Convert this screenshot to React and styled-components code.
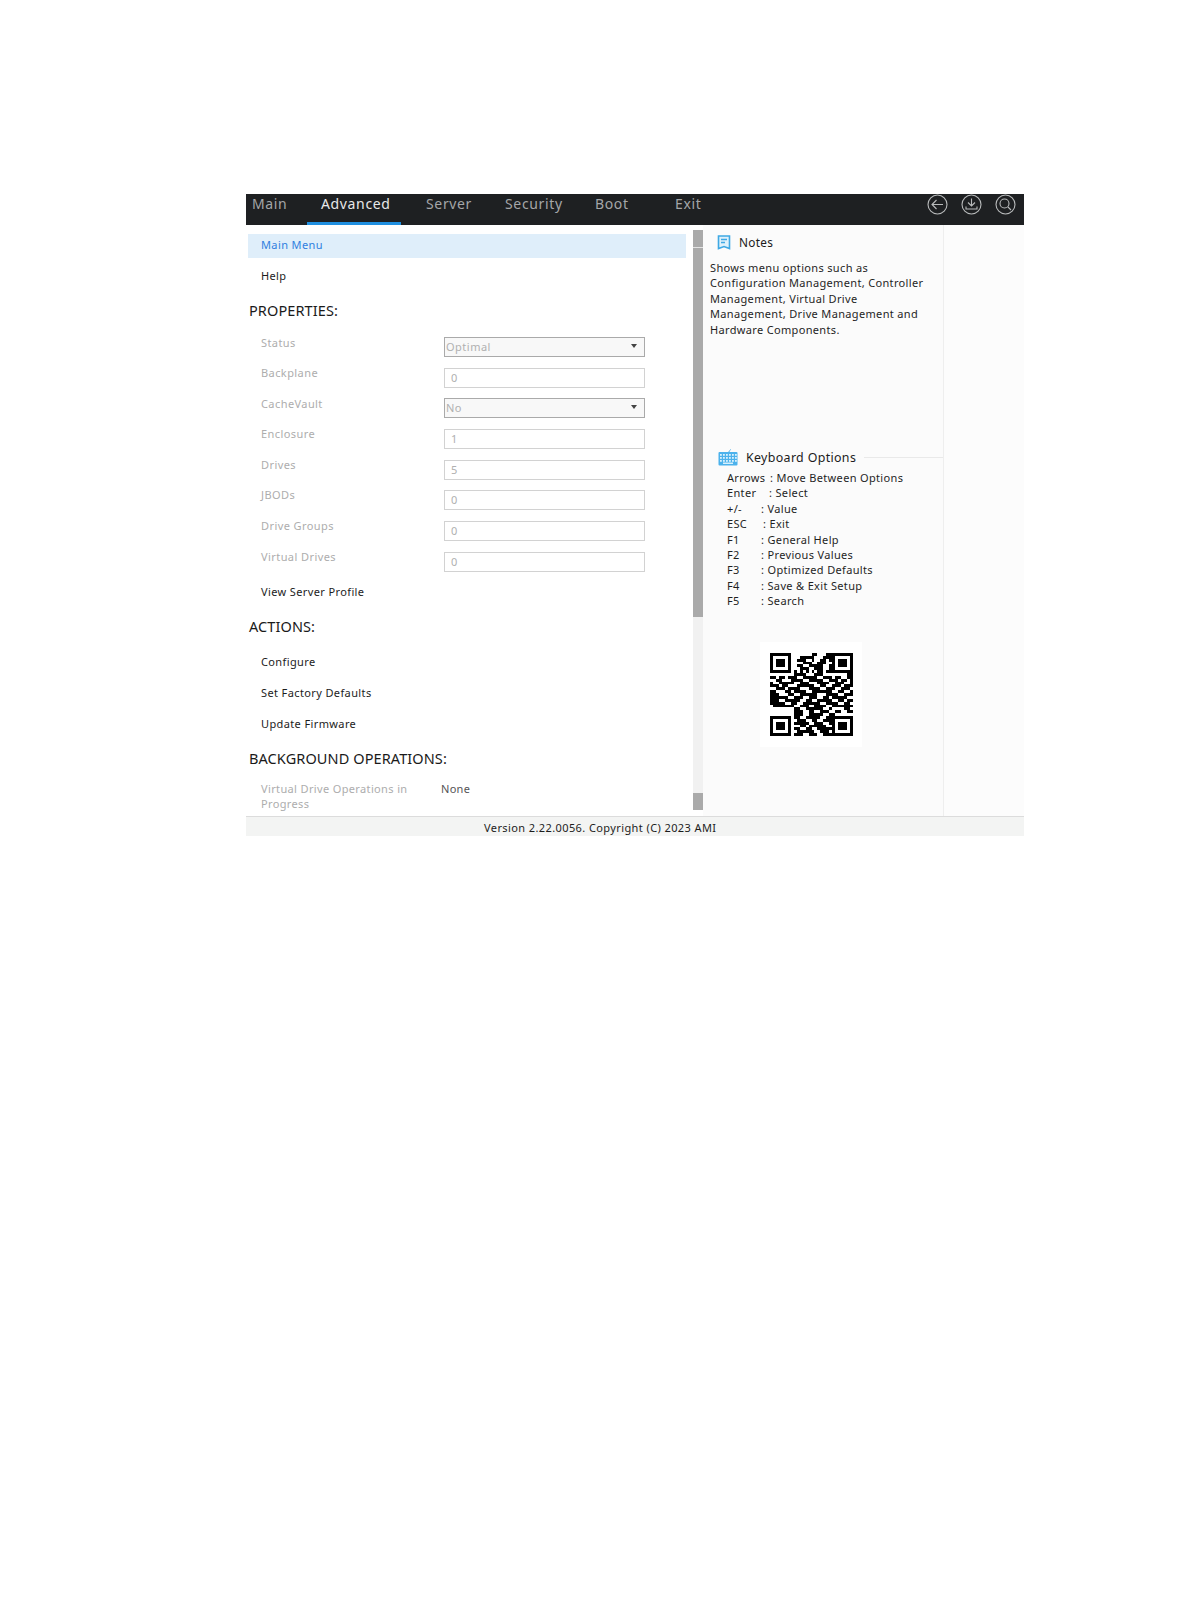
import React from "react";
import styled, { createGlobalStyle } from "styled-components";

const Global = createGlobalStyle`
  html, body {
    margin: 0;
    background: #fff;
    font-family: "Noto Sans", "Open Sans", sans-serif;
  }
`;

const Page = styled.div`
  width: 1191px;
  height: 1616px;
  padding: 194px 0 0 246px;
  box-sizing: border-box;
`;

const Frame = styled.div`
  width: 778px;
  display: flex;
  flex-direction: column;
`;

const Nav = styled.div`
  height: 31px;
  background: #1e2022;
  display: flex;
  align-items: stretch;
`;

const Tab = styled.div`
  width: ${(p) => p.$w}px;
  padding-left: ${(p) => p.$pl}px;
  box-sizing: border-box;
  font-size: 14px;
  line-height: 19px;
  letter-spacing: 0.65px;
  color: ${(p) => (p.$active ? "#e8e8e8" : "#a4a6a8")};
  border-bottom: 3px solid ${(p) => (p.$active ? "#1f8fe0" : "transparent")};
`;

const NavIcons = styled.div`
  margin-left: auto;
  display: flex;
  align-items: flex-start;
  gap: 13px;
  padding: 0 8px 0 0;
`;

const Body = styled.div`
  height: 591px;
  display: grid;
  grid-template-columns: 447px 10px 241px 80px;
`;

const Left = styled.div`
  padding: 9px 7px 0 2px;
  overflow: hidden;
`;

const MenuRow = styled.div`
  height: 24px;
  line-height: ${(p) => (p.$selected ? 22 : 24)}px;
  padding-left: 13px;
  font-size: 11px;
  letter-spacing: 0.38px;
  color: ${(p) => (p.$selected ? "#2f7fe0" : "#1c1c1c")};
  background: ${(p) => (p.$selected ? "#dfeefa" : "transparent")};
  margin-top: ${(p) => p.$mt || 0}px;
`;

const Section = styled.div`
  font-size: 14.5px;
  line-height: 20px;
  letter-spacing: 0.1px;
  padding-left: 1px;
  color: #1a1a1a;
  margin-top: ${(p) => p.$mt}px;
`;

const Fields = styled.div`
  margin-top: 17px;
  display: flex;
  flex-direction: column;
  gap: 11px;
`;

const Field = styled.div`
  height: 19.7px;
  display: grid;
  grid-template-columns: 196px 201px;
`;

const Label = styled.div`
  padding: ${(p) => (p.$select ? 1 : 0)}px 0 0 13px;
  font-size: 11px;
  line-height: 9px;
  letter-spacing: 0.42px;
  color: #adadad;
`;

const InputBox = styled.div`
  position: relative;
  border: 1px solid ${(p) => (p.$select ? "#aaa" : "#d2d2d2")};
  background: ${(p) => (p.$select ? "#f8f8f8" : "#fff")};
  padding-left: ${(p) => (p.$select ? 1 : 6)}px;
  font-size: 11px;
  line-height: 18px;
  letter-spacing: 0.5px;
  color: #b0b0b0;
`;

const Caret = styled.span`
  position: absolute;
  right: 7px;
  top: 6px;
  width: 0;
  height: 0;
  border-left: 3.5px solid transparent;
  border-right: 3.5px solid transparent;
  border-top: 4px solid #444;
`;

const OperationRow = styled.div`
  display: grid;
  grid-template-columns: 193px 1fr;
  margin-top: 13px;
`;

const OperationLabel = styled.div`
  padding-left: 13px;
  font-size: 11px;
  line-height: 15.4px;
  letter-spacing: 0.36px;
  color: #adadad;
`;

const OperationValue = styled.div`
  font-size: 11px;
  line-height: 15.4px;
  letter-spacing: 0.3px;
  color: #555;
`;

const Scrollbar = styled.div`
  margin-top: 5px;
  height: 580px;
  background: #f1f1f1;
  display: flex;
  flex-direction: column;
  justify-content: space-between;
`;

const Thumb = styled.div`
  position: relative;
  height: ${(p) => p.$h}px;
  background: #aaa;
`;

const ThumbLine = styled.span`
  position: absolute;
  left: 0;
  right: 0;
  top: 17px;
  height: 1px;
  background: #e4e4e4;
`;

const Right = styled.div`
  background: #fbfbfb;
  border-right: 1px solid #eee;
  padding: 0 0 0 7px;
`;

const RightEnd = styled.div`
  background: #fcfcfc;
`;

const NotesHead = styled.div`
  display: flex;
  align-items: center;
  height: 20px;
  margin-top: 7px;
  padding-left: 7px;
  gap: 8px;
  font-size: 11.8px;
  letter-spacing: 0.3px;
  color: #1c1c1c;
`;

const Notes = styled.div`
  margin-top: 8px;
  width: 226px;
  font-size: 11px;
  line-height: 15.4px;
  letter-spacing: 0.34px;
  color: #1f1f1f;
`;

const KeyHead = styled.div`
  display: flex;
  align-items: center;
  margin-top: 110px;
  margin-left: 8px;
  height: 20px;
  gap: 8px;
  font-size: 12.4px;
  letter-spacing: 0.35px;
  color: #1c1c1c;
`;

const KeyRule = styled.div`
  flex: 1;
  height: 1px;
  background: #e9e9e9;
`;

const KeyList = styled.div`
  margin: 3px 0 0 17px;
`;

const KeyRow = styled.div`
  display: flex;
  font-size: 11px;
  line-height: 15.4px;
  letter-spacing: 0.34px;
  color: #1f1f1f;
`;

const KeyName = styled.span`
  width: ${(p) => p.$w}px;
`;

const QrWrap = styled.div`
  width: 102px;
  height: 105px;
  margin: 33px 0 0 50px;
  background: #fff;
  display: flex;
  align-items: center;
  justify-content: center;
`;

const Footer = styled.div`
  height: 20px;
  box-sizing: border-box;
  border-top: 1px solid #dcdcdc;
  background: #f3f4f3;
  padding-left: 238px;
  font-size: 11px;
  line-height: 21px;
  letter-spacing: 0.4px;
  color: #1c1c1c;
`;

const CircleIcon = ({ children }) => (
  <svg width="21" height="21" viewBox="0 0 21 21" fill="none" stroke="#b8babb" strokeWidth="1.1">
    <circle cx="10.5" cy="10.5" r="9.5" />
    {children}
  </svg>
);

const NotesIcon = () => (
  <svg width="14" height="15" viewBox="0 0 14 15" fill="#dff1fb" stroke="#3fa9e4" strokeWidth="1.6">
    <path d="M1.5 1h11v12.5l-5.500-2-5.500 2z" />
    <path d="M4 4.500h6M4 7.500h4" fill="none" />
  </svg>
);

const KeyboardIcon = () => (
  <svg width="20" height="17" viewBox="0 0 20 17">
    <path d="M11 3c0-1.500 1-1 1.500-2.500" fill="none" stroke="#3fa9e4" strokeWidth="1" />
    <rect x="0.5" y="3" width="19" height="13.5" rx="1" fill="#4cb2ec" />
    {[5, 8, 11].map((y) =>
      [2, 5, 8, 11, 14, 17].map((x) => <rect key={x + "-" + y} x={x} y={y} width="1.8" height="1.8" fill="#d8f0fc" />)
    )}
    <rect x="5" y="13.5" width="10" height="1.5" fill="#d8f0fc" />
  </svg>
);

// corners of the code
const finder = ["1111111", "1000001", "1011101", "1011101", "1011101", "1000001", "1111111"];
const qrTop = [
  "00000011000111",
  "00111110001111",
  "01110010011011",
  "00011100111001",
  "01100111110011",
  "00111001110011",
  "10101010110111",
];
const qrMiddle = [
  "00000000111100011100000000111",
  "11011011100111110011101100110",
  "00110001111001111100111011011",
  "10011111001110001111001110011",
  "11101100011111100110011101110",
  "00111011110001111001110011101",
  "11000110111100111111100110011",
  "11100011001111110001111001110",
  "11111100111001110011011111001",
  "11100111110011001111100110111",
  "11111001100111111001111001101",
  "01111111001110011110011111110",
  "00000000110011111100100001100",
  "00000000111001100111001100110",
  "00000000111001111100110000000",
];
const qrBottom = [
  "11001111100111",
  "01110011001110",
  "11111001110011",
  "00110111111001",
  "11001100111110",
  "01111110011100",
  "11100111001111",
];
const qrRows = [
  ...qrTop.map((mid, i) => finder[i] + "0" + mid.slice(0, 13) + finder[i]),
  ...qrMiddle,
  ...qrBottom.map((mid, i) => finder[i] + "0" + mid.slice(0, 13) + finder[i]),
];

const QrCode = () => (
  <svg width="83" height="83" viewBox="0 0 28 29" preserveAspectRatio="none" shapeRendering="crispEdges">
    {qrRows.map((row, y) =>
      row.split("").map((c, x) => (c === "1" ? <rect key={x + "-" + y} x={x} y={y} width="1" height="1" fill="#000" /> : null))
    )}
  </svg>
);

const tabs = [
  { name: "Main", w: 61, pl: 6 },
  { name: "Advanced", w: 94, pl: 14, active: true },
  { name: "Server", w: 79, pl: 25 },
  { name: "Security", w: 115, pl: 25 },
  { name: "Boot", w: 80, pl: 0 },
  { name: "Exit", w: 60, pl: 0 },
];

const fields = [
  { label: "Status", value: "Optimal", select: true },
  { label: "Backplane", value: "0" },
  { label: "CacheVault", value: "No", select: true },
  { label: "Enclosure", value: "1" },
  { label: "Drives", value: "5" },
  { label: "JBODs", value: "0" },
  { label: "Drive Groups", value: "0" },
  { label: "Virtual Drives", value: "0" },
];

const keys = [
  ["Arrows", 43, ": Move Between Options"],
  ["Enter", 42, ": Select"],
  ["+/-", 34, ": Value"],
  ["ESC", 36, ": Exit"],
  ["F1", 34, ": General Help"],
  ["F2", 34, ": Previous Values"],
  ["F3", 34, ": Optimized Defaults"],
  ["F4", 34, ": Save & Exit Setup"],
  ["F5", 34, ": Search"],
];

const App = () => {
  return (
    <Page>
      <Global />
      <Frame>
        <Nav>
          {tabs.map((t) => (
            <Tab key={t.name} $w={t.w} $pl={t.pl} $active={t.active}>
              {t.name}
            </Tab>
          ))}
          <NavIcons>
            <CircleIcon>
              <path d="M16 10.500H5M9.500 6l-4.500 4.500 4.500 4.500" />
            </CircleIcon>
            <CircleIcon>
              <path d="M10.500 4.500v7M7 8.500l3.500 3.500 3.500-3.500M5 12.500v2.500h11v-2.500" />
            </CircleIcon>
            <CircleIcon>
              <circle cx="9.500" cy="9.500" r="4.500" />
              <path d="M13 13l3 3" />
            </CircleIcon>
          </NavIcons>
        </Nav>
        <Body>
          <Left>
            <MenuRow $selected>Main Menu</MenuRow>
            <MenuRow $mt={6}>Help</MenuRow>
            <Section $mt={12}>PROPERTIES:</Section>
            <Fields>
              {fields.map((f) => (
                <Field key={f.label}>
                  <Label $select={f.select}>{f.label}</Label>
                  <InputBox $select={f.select}>
                    {f.value}
                    {f.select && <Caret />}
                  </InputBox>
                </Field>
              ))}
            </Fields>
            <MenuRow $mt={8}>View Server Profile</MenuRow>
            <Section $mt={12}>ACTIONS:</Section>
            <MenuRow $mt={14}>Configure</MenuRow>
            <MenuRow $mt={7}>Set Factory Defaults</MenuRow>
            <MenuRow $mt={7}>Update Firmware</MenuRow>
            <Section $mt={12}>BACKGROUND OPERATIONS:</Section>
            <OperationRow>
              <OperationLabel>
                Virtual Drive Operations in
                <br />
                Progress
              </OperationLabel>
              <OperationValue>None</OperationValue>
            </OperationRow>
          </Left>
          <Scrollbar>
            <Thumb $h={387}>
              <ThumbLine />
            </Thumb>
            <Thumb $h={17} />
          </Scrollbar>
          <Right>
            <NotesHead>
              <NotesIcon />
              Notes
            </NotesHead>
            <Notes>
              Shows menu options such as Configuration Management, Controller Management, Virtual Drive Management,
              Drive Management and Hardware Components.
            </Notes>
            <KeyHead>
              <KeyboardIcon />
              Keyboard Options
              <KeyRule />
            </KeyHead>
            <KeyList>
              {keys.map(([name, w, text]) => (
                <KeyRow key={name}>
                  <KeyName $w={w}>{name}</KeyName>
                  {text}
                </KeyRow>
              ))}
            </KeyList>
            <QrWrap>
              <QrCode />
            </QrWrap>
          </Right>
          <RightEnd />
        </Body>
        <Footer>Version 2.22.0056. Copyright (C) 2023 AMI</Footer>
      </Frame>
    </Page>
  );
};

export default App;
